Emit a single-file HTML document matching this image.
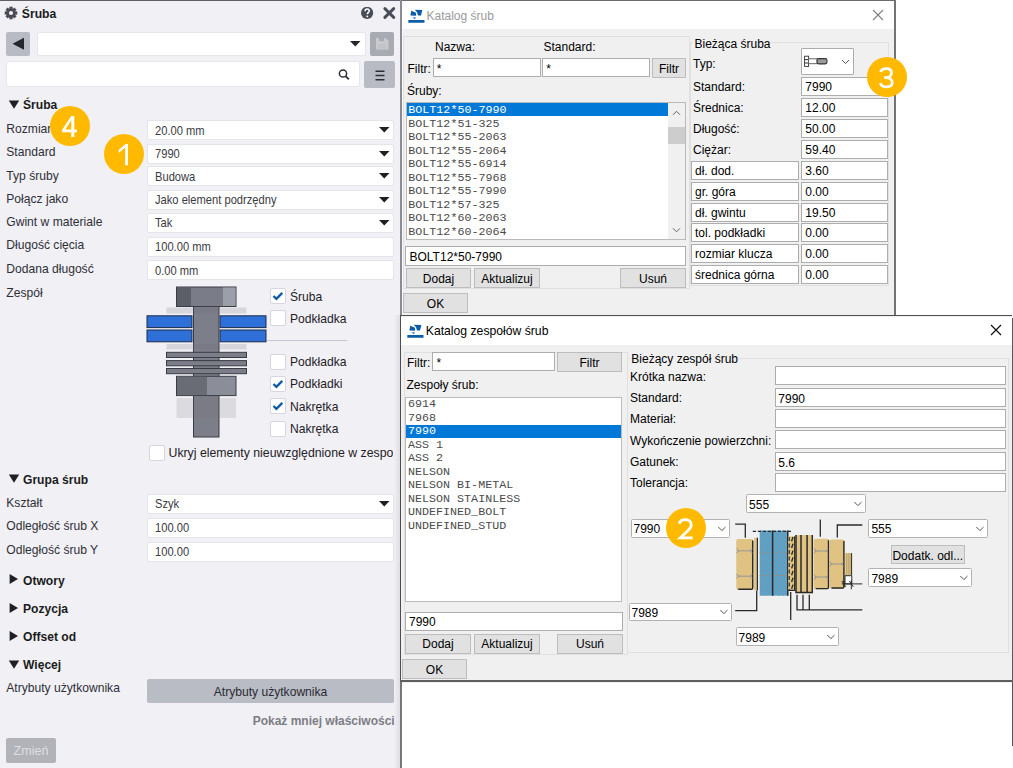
<!DOCTYPE html><html><head><meta charset="utf-8"><style>
html,body{margin:0;padding:0;width:1013px;height:768px;overflow:hidden;background:#fff}
.a{position:absolute}
.t{position:absolute;white-space:nowrap;line-height:1em;font-family:"Liberation Sans",sans-serif}
.t.m{font-family:"Liberation Mono",monospace}
</style></head><body><div class="a" style="left:0;top:0;width:1013px;height:768px;background:#fff"></div>
<div class="a" style="left:0px;top:0px;width:400px;height:768px;background:#f1f0f5;"></div>
<div class="a" style="left:0px;top:0px;width:400px;height:1px;background:#5d5f69;"></div>
<svg class="a" style="left:4px;top:6px;" width="14" height="14" viewBox="0 0 14 14"><g transform="translate(7,7)" fill="#474a54"><rect x="-1.6" y="-6.3" width="3.2" height="3" transform="rotate(0)"/><rect x="-1.6" y="-6.3" width="3.2" height="3" transform="rotate(45)"/><rect x="-1.6" y="-6.3" width="3.2" height="3" transform="rotate(90)"/><rect x="-1.6" y="-6.3" width="3.2" height="3" transform="rotate(135)"/><rect x="-1.6" y="-6.3" width="3.2" height="3" transform="rotate(180)"/><rect x="-1.6" y="-6.3" width="3.2" height="3" transform="rotate(225)"/><rect x="-1.6" y="-6.3" width="3.2" height="3" transform="rotate(270)"/><rect x="-1.6" y="-6.3" width="3.2" height="3" transform="rotate(315)"/><circle r="4.6"/><circle r="2.1" fill="#f1f0f5"/></g></svg>
<div class="t s" style="left:21.80px;top:7.97px;font-size:12.2px;color:#1b1c20;font-weight:700;">Śruba</div>
<svg class="a" style="left:361px;top:7px;" width="13" height="13" viewBox="0 0 13 13"><circle cx="6.1" cy="5.9" r="6.1" fill="#4a4d57"/><path d="M4.1 4.3 C4.1 2.8 5 2.1 6.2 2.1 C7.4 2.1 8.2 2.9 8.2 3.9 C8.2 5.3 6.3 5.5 6.3 7.3" fill="none" stroke="#fff" stroke-width="1.5"/><circle cx="6.3" cy="9.4" r="0.95" fill="#fff"/></svg>
<svg class="a" style="left:383px;top:7px;" width="13" height="13" viewBox="0 0 13 13"><path d="M1.9 1.6 L10.7 10.4 M10.7 1.6 L1.9 10.4" stroke="#4a4d57" stroke-width="2.9" stroke-linecap="round"/></svg>
<div class="a" style="left:6px;top:32px;width:24px;height:24px;background:#b8bac4;border-radius:2px;"></div>
<svg class="a" style="left:6px;top:32px;" width="24" height="24" viewBox="0 0 24 24"><path d="M6.5 11.8 L18 5.8 L18 17.8 Z" fill="#25272e"/></svg>
<div class="a" style="left:36.5px;top:32px;width:329px;height:23.5px;background:#fff;border:1px solid #e6e6ec;box-sizing:border-box;border-radius:2px;"></div>
<svg class="a" style="left:350px;top:41px;" width="11" height="6" viewBox="0 0 11 6"><path d="M0 0 L10.5 0 L5.25 5.5 Z" fill="#25272e"/></svg>
<div class="a" style="left:370px;top:32px;width:24px;height:24px;background:#a9abb2;border-radius:2px;"></div>
<svg class="a" style="left:370px;top:32px;" width="24" height="24" viewBox="0 0 24 24"><path d="M6 6 H15.5 L18.5 9 V17.5 H6 Z" fill="#c9cace"/><rect x="9" y="6" width="5" height="3.2" fill="#a9abb2"/><rect x="8.5" y="12" width="7.5" height="5.5" fill="#c2c3c8"/></svg>
<div class="a" style="left:5.5px;top:61.3px;width:354px;height:26px;background:#fff;border:1px solid #e6e6ec;box-sizing:border-box;border-radius:2px;"></div>
<svg class="a" style="left:338px;top:68px;" width="13" height="13" viewBox="0 0 13 13"><circle cx="5" cy="5.5" r="3.6" fill="none" stroke="#2b2d33" stroke-width="1.5"/><path d="M7.6 8.2 L10.8 11.4" stroke="#2b2d33" stroke-width="1.8"/></svg>
<div class="a" style="left:364.3px;top:61.3px;width:30.7px;height:26.4px;background:#b8bac4;border-radius:2px;"></div>
<svg class="a" style="left:365px;top:61px;" width="30" height="26" viewBox="0 0 30 26"><path d="M10.5 10.2 H19.5 M10.5 14.5 H19.5 M10.5 18.8 H19.5" stroke="#2b2d36" stroke-width="1.4"/></svg>
<svg class="a" style="left:8px;top:100px;" width="12" height="10" viewBox="0 0 12 10"><path d="M0.8 0.4 L11.2 0.4 L6 8.8 Z" fill="#1f2026"/></svg>
<div class="t s" style="left:23.00px;top:99.25px;font-size:12.1px;color:#1b1c20;font-weight:700;">Śruba</div>
<div class="t s" style="left:6.30px;top:123.05px;font-size:12.1px;color:#2e2f35;">Rozmiar</div>
<div class="a" style="left:147px;top:120.4px;width:247px;height:20px;background:#fff;border:1px solid #e4e4ea;box-sizing:border-box;border-radius:2px;"></div>
<div class="t s" style="left:154.80px;top:124.87px;font-size:12.2px;color:#3a3b42;transform:scaleX(0.915);transform-origin:0 0;">20.00 mm</div>
<svg class="a" style="left:379px;top:127.4px;" width="11" height="6" viewBox="0 0 11 6"><path d="M0 0 L10.5 0 L5.25 5.5 Z" fill="#1f2026"/></svg>
<div class="t s" style="left:6.30px;top:146.15px;font-size:12.1px;color:#2e2f35;">Standard</div>
<div class="a" style="left:147px;top:143.6px;width:247px;height:20px;background:#fff;border:1px solid #e4e4ea;box-sizing:border-box;border-radius:2px;"></div>
<div class="t s" style="left:154.80px;top:148.07px;font-size:12.2px;color:#3a3b42;transform:scaleX(0.915);transform-origin:0 0;">7990</div>
<svg class="a" style="left:379px;top:150.6px;" width="11" height="6" viewBox="0 0 11 6"><path d="M0 0 L10.5 0 L5.25 5.5 Z" fill="#1f2026"/></svg>
<div class="t s" style="left:6.30px;top:169.55px;font-size:12.1px;color:#2e2f35;">Typ śruby</div>
<div class="a" style="left:147px;top:166.4px;width:247px;height:20px;background:#fff;border:1px solid #e4e4ea;box-sizing:border-box;border-radius:2px;"></div>
<div class="t s" style="left:154.80px;top:170.87px;font-size:12.2px;color:#3a3b42;transform:scaleX(0.915);transform-origin:0 0;">Budowa</div>
<svg class="a" style="left:379px;top:173.4px;" width="11" height="6" viewBox="0 0 11 6"><path d="M0 0 L10.5 0 L5.25 5.5 Z" fill="#1f2026"/></svg>
<div class="t s" style="left:6.30px;top:192.55px;font-size:12.1px;color:#2e2f35;">Połącz jako</div>
<div class="a" style="left:147px;top:189.6px;width:247px;height:20px;background:#fff;border:1px solid #e4e4ea;box-sizing:border-box;border-radius:2px;"></div>
<div class="t s" style="left:154.80px;top:194.07px;font-size:12.2px;color:#3a3b42;transform:scaleX(0.915);transform-origin:0 0;">Jako element podrzędny</div>
<svg class="a" style="left:379px;top:196.6px;" width="11" height="6" viewBox="0 0 11 6"><path d="M0 0 L10.5 0 L5.25 5.5 Z" fill="#1f2026"/></svg>
<div class="t s" style="left:6.30px;top:215.95px;font-size:12.1px;color:#2e2f35;">Gwint w materiale</div>
<div class="a" style="left:147px;top:213px;width:247px;height:20px;background:#fff;border:1px solid #e4e4ea;box-sizing:border-box;border-radius:2px;"></div>
<div class="t s" style="left:154.80px;top:217.47px;font-size:12.2px;color:#3a3b42;transform:scaleX(0.915);transform-origin:0 0;">Tak</div>
<svg class="a" style="left:379px;top:220px;" width="11" height="6" viewBox="0 0 11 6"><path d="M0 0 L10.5 0 L5.25 5.5 Z" fill="#1f2026"/></svg>
<div class="t s" style="left:6.30px;top:238.95px;font-size:12.1px;color:#2e2f35;">Długość cięcia</div>
<div class="a" style="left:147px;top:236.6px;width:247px;height:20px;background:#fff;border:1px solid #e4e4ea;box-sizing:border-box;border-radius:2px;"></div>
<div class="t s" style="left:154.80px;top:241.07px;font-size:12.2px;color:#3a3b42;transform:scaleX(0.915);transform-origin:0 0;">100.00 mm</div>
<div class="t s" style="left:6.30px;top:262.55px;font-size:12.1px;color:#2e2f35;">Dodana długość</div>
<div class="a" style="left:147px;top:260.2px;width:247px;height:20px;background:#fff;border:1px solid #e4e4ea;box-sizing:border-box;border-radius:2px;"></div>
<div class="t s" style="left:154.80px;top:264.67px;font-size:12.2px;color:#3a3b42;transform:scaleX(0.915);transform-origin:0 0;">0.00 mm</div>
<div class="t s" style="left:6.30px;top:287.05px;font-size:12.1px;color:#2e2f35;">Zespół</div>
<svg class="a" style="left:0px;top:0px;pointer-events:none" width="400" height="768" viewBox="0 0 400 768"><rect x="147" y="315.8" width="45" height="11.8" fill="#2e6fd8" stroke="#1c2c4c" stroke-width="1"/><rect x="220" y="315.8" width="46" height="11.8" fill="#2e6fd8" stroke="#1c2c4c" stroke-width="1"/><rect x="147" y="330" width="45" height="11.8" fill="#2e6fd8" stroke="#1c2c4c" stroke-width="1"/><rect x="220" y="330" width="46" height="11.8" fill="#2e6fd8" stroke="#1c2c4c" stroke-width="1"/><rect x="193.5" y="306" width="25.5" height="131" fill="#7c7e89" stroke="#3a3c44" stroke-width="1"/><rect x="166.5" y="352.3" width="80" height="5.2" fill="#7b7d88" stroke="#3a3c44" stroke-width="1"/><rect x="166.5" y="360.6" width="80" height="5.2" fill="#7b7d88" stroke="#3a3c44" stroke-width="1"/><rect x="166.5" y="368.5" width="80" height="5.2" fill="#7b7d88" stroke="#3a3c44" stroke-width="1"/><rect x="176.5" y="287" width="59.5" height="19.5" fill="#7a7c87" stroke="#3a3c44" stroke-width="1"/><rect x="177" y="287.5" width="14" height="18.5" fill="#5b5d67"/><rect x="223" y="287.5" width="12.5" height="18.5" fill="#9c9ea8"/><rect x="176.5" y="376.3" width="59.5" height="19.3" fill="#8b8d98" stroke="#3a3c44" stroke-width="1"/><rect x="177" y="376.8" width="30" height="18.3" fill="#696b75"/><rect x="166.5" y="307.5" width="80" height="6" fill="rgba(110,110,120,0.2)"/><rect x="166.5" y="344" width="80" height="5.5" fill="rgba(110,110,120,0.2)"/><rect x="176.5" y="398" width="59.5" height="20" fill="rgba(110,110,120,0.17)"/></svg>
<div class="a" style="left:269.5px;top:288px;width:16px;height:16px;background:#fff;border:1px solid #d6d6de;box-sizing:border-box;border-radius:2px;"></div>
<svg class="a" style="left:269.5px;top:288px;" width="16" height="16" viewBox="0 0 16 16"><path d="M3.5 8 L6.4 10.8 L12.3 4.9" fill="none" stroke="#0d58a8" stroke-width="2.3"/></svg>
<div class="t s" style="left:290.00px;top:290.55px;font-size:12.1px;color:#1f2025;">Śruba</div>
<div class="a" style="left:269.5px;top:310px;width:16px;height:16px;background:#fff;border:1px solid #d6d6de;box-sizing:border-box;border-radius:2px;"></div>
<div class="t s" style="left:290.00px;top:312.75px;font-size:12.1px;color:#1f2025;">Podkładka</div>
<div class="a" style="left:269.5px;top:354px;width:16px;height:16px;background:#fff;border:1px solid #d6d6de;box-sizing:border-box;border-radius:2px;"></div>
<div class="t s" style="left:290.00px;top:356.25px;font-size:12.1px;color:#1f2025;">Podkładka</div>
<div class="a" style="left:269.5px;top:376px;width:16px;height:16px;background:#fff;border:1px solid #d6d6de;box-sizing:border-box;border-radius:2px;"></div>
<svg class="a" style="left:269.5px;top:376px;" width="16" height="16" viewBox="0 0 16 16"><path d="M3.5 8 L6.4 10.8 L12.3 4.9" fill="none" stroke="#0d58a8" stroke-width="2.3"/></svg>
<div class="t s" style="left:290.00px;top:378.45px;font-size:12.1px;color:#1f2025;">Podkładki</div>
<div class="a" style="left:269.5px;top:398px;width:16px;height:16px;background:#fff;border:1px solid #d6d6de;box-sizing:border-box;border-radius:2px;"></div>
<svg class="a" style="left:269.5px;top:398px;" width="16" height="16" viewBox="0 0 16 16"><path d="M3.5 8 L6.4 10.8 L12.3 4.9" fill="none" stroke="#0d58a8" stroke-width="2.3"/></svg>
<div class="t s" style="left:290.00px;top:400.55px;font-size:12.1px;color:#1f2025;">Nakrętka</div>
<div class="a" style="left:269.5px;top:420.5px;width:16px;height:16px;background:#fff;border:1px solid #d6d6de;box-sizing:border-box;border-radius:2px;"></div>
<div class="t s" style="left:290.00px;top:422.85px;font-size:12.1px;color:#1f2025;">Nakrętka</div>
<div class="a" style="left:267px;top:339.5px;width:80px;height:1.2px;background:#c7c8cf;"></div>
<div class="a" style="left:149px;top:444.5px;width:16px;height:16px;background:#fff;border:1px solid #d6d6de;box-sizing:border-box;border-radius:2px;"></div>
<div class="t s" style="left:168.50px;top:447.29px;font-size:12.3px;color:#1f2025;width:224.5px;overflow:hidden">Ukryj elementy nieuwzględnione w zespo</div>
<svg class="a" style="left:8px;top:474px;" width="12" height="10" viewBox="0 0 12 10"><path d="M0.8 0.4 L11.2 0.4 L6 8.8 Z" fill="#1f2026"/></svg>
<div class="t s" style="left:23.00px;top:473.55px;font-size:12.1px;color:#1b1c20;font-weight:700;">Grupa śrub</div>
<div class="t s" style="left:6.30px;top:496.75px;font-size:12.1px;color:#2e2f35;">Kształt</div>
<div class="a" style="left:147px;top:494px;width:247px;height:20px;background:#fff;border:1px solid #e4e4ea;box-sizing:border-box;border-radius:2px;"></div>
<div class="t s" style="left:154.80px;top:498.47px;font-size:12.2px;color:#3a3b42;transform:scaleX(0.915);transform-origin:0 0;">Szyk</div>
<svg class="a" style="left:379px;top:501px;" width="11" height="6" viewBox="0 0 11 6"><path d="M0 0 L10.5 0 L5.25 5.5 Z" fill="#1f2026"/></svg>
<div class="t s" style="left:6.30px;top:520.05px;font-size:12.1px;color:#2e2f35;">Odległość śrub X</div>
<div class="a" style="left:147px;top:518px;width:247px;height:20px;background:#fff;border:1px solid #e4e4ea;box-sizing:border-box;border-radius:2px;"></div>
<div class="t s" style="left:154.80px;top:522.47px;font-size:12.2px;color:#3a3b42;transform:scaleX(0.915);transform-origin:0 0;">100.00</div>
<div class="t s" style="left:6.30px;top:543.75px;font-size:12.1px;color:#2e2f35;">Odległość śrub Y</div>
<div class="a" style="left:147px;top:542px;width:247px;height:20px;background:#fff;border:1px solid #e4e4ea;box-sizing:border-box;border-radius:2px;"></div>
<div class="t s" style="left:154.80px;top:546.47px;font-size:12.2px;color:#3a3b42;transform:scaleX(0.915);transform-origin:0 0;">100.00</div>
<svg class="a" style="left:9px;top:574px;" width="10" height="11" viewBox="0 0 10 11"><path d="M0.6 0 L9 5 L0.6 10 Z" fill="#1f2026"/></svg>
<div class="t s" style="left:23.00px;top:574.55px;font-size:12.1px;color:#1b1c20;font-weight:700;">Otwory</div>
<svg class="a" style="left:9px;top:602.8px;" width="10" height="11" viewBox="0 0 10 11"><path d="M0.6 0 L9 5 L0.6 10 Z" fill="#1f2026"/></svg>
<div class="t s" style="left:23.00px;top:602.55px;font-size:12.1px;color:#1b1c20;font-weight:700;">Pozycja</div>
<svg class="a" style="left:9px;top:631.3px;" width="10" height="11" viewBox="0 0 10 11"><path d="M0.6 0 L9 5 L0.6 10 Z" fill="#1f2026"/></svg>
<div class="t s" style="left:23.00px;top:630.95px;font-size:12.1px;color:#1b1c20;font-weight:700;">Offset od</div>
<svg class="a" style="left:8px;top:659.5px;" width="12" height="10" viewBox="0 0 12 10"><path d="M0.8 0.4 L11.2 0.4 L6 8.8 Z" fill="#1f2026"/></svg>
<div class="t s" style="left:23.00px;top:658.75px;font-size:12.1px;color:#1b1c20;font-weight:700;">Więcej</div>
<div class="t s" style="left:6.30px;top:681.95px;font-size:12.1px;color:#2e2f35;">Atrybuty użytkownika</div>
<div class="a" style="left:147px;top:679px;width:247px;height:24px;background:#b9bbc5;border-radius:2px;"></div>
<div class="t s" style="left:270.50px;top:685.75px;font-size:12.1px;color:#2a2b31;transform:translateX(-50%);">Atrybuty użytkownika</div>
<div class="t s" style="right:618.30px;top:715.04px;font-size:12.0px;color:#7c7d84;font-weight:700;">Pokaż mniej właściwości</div>
<div class="a" style="left:6px;top:738.3px;width:50.2px;height:25px;background:#b2b3b9;border-radius:2px;"></div>
<div class="t s" style="left:31.00px;top:744.83px;font-size:12.6px;color:#dedee3;transform:translateX(-50%);">Zmień</div>
<div class="a" style="left:394px;top:315px;width:6px;height:453px;background:linear-gradient(to right, rgba(0,0,0,0), rgba(0,0,0,0.08))"></div>
<div class="a" style="left:400px;top:0px;width:496px;height:316px;background:#f0f0f0;"></div>
<div class="a" style="left:402px;top:1px;width:492px;height:28px;background:#fff;"></div>
<div class="a" style="left:400px;top:0px;width:496px;height:1px;background:#6b6b6b;"></div>
<div class="a" style="left:400px;top:0px;width:2px;height:316px;background:#8a8c95;"></div>
<div class="a" style="left:894px;top:0px;width:2px;height:316px;background:#737373;"></div>
<div class="a" style="left:402px;top:29px;width:1px;height:286px;background:#fafafa;"></div>
<svg class="a" style="left:408px;top:9px;" width="18" height="16" viewBox="0 0 18 16"><path d="M3.2 1.8 L8 3.8 L8.1 6.7 L2.4 6.4 Z" fill="#0b5ca9"/><path d="M6.8 0.8 L14.4 1 L13 6.4 L10 6.4 L9 3.2 Z" fill="#0b5ca9"/><path d="M4.3 8.2 L8 8.5 L6.9 9.9 Z" fill="#0b5ca9"/><rect x="0.3" y="10.9" width="16.2" height="2.9" rx="0.4" fill="#0b5ca9"/></svg>
<div class="t s" style="left:426.50px;top:9.64px;font-size:12.0px;color:#9a9a9a;">Katalog śrub</div>
<svg class="a" style="left:872px;top:9px;" width="12" height="12" viewBox="0 0 12 12"><path d="M1 1 L11 11 M11 1 L1 11" stroke="#808080" stroke-width="1.1"/></svg>
<div class="a" style="left:403px;top:36px;width:287px;height:253px;border:1px solid #e0e0e0;box-sizing:border-box;"></div>
<div class="t s" style="left:435.00px;top:40.84px;font-size:12.0px;color:#000;">Nazwa:</div>
<div class="t s" style="left:543.50px;top:40.84px;font-size:12.0px;color:#000;">Standard:</div>
<div class="t s" style="left:407.50px;top:62.84px;font-size:12.0px;color:#000;">Filtr:</div>
<div class="a" style="left:433px;top:58px;width:108px;height:19px;background:#fff;border:1px solid #adadad;box-sizing:border-box;"></div>
<div class="t s" style="left:436.80px;top:63.44px;font-size:12.0px;color:#000;">*</div>
<div class="a" style="left:542px;top:58px;width:108px;height:19px;background:#fff;border:1px solid #adadad;box-sizing:border-box;"></div>
<div class="t s" style="left:546.30px;top:63.44px;font-size:12.0px;color:#000;">*</div>
<div class="a" style="left:652px;top:58px;width:34px;height:20px;background:#e1e1e1;border:1px solid #bdbdbd;box-sizing:border-box;"></div>
<div class="t s" style="left:669.00px;top:62.84px;font-size:12.0px;color:#000;transform:translateX(-50%);">Filtr</div>
<div class="t s" style="left:407.00px;top:85.34px;font-size:12.0px;color:#000;">Śruby:</div>
<div class="a" style="left:406px;top:102px;width:280px;height:138px;background:#fff;border:1px solid #bababa;box-sizing:border-box;"></div>
<div class="a" style="left:407px;top:103px;width:261px;height:13px;background:#0078d7;"></div>
<div class="t m" style="left:408.30px;top:105.44px;font-size:11.7px;color:#fff;">BOLT12*50-7990</div>
<div class="t m" style="left:408.30px;top:118.91px;font-size:11.7px;color:#4a4a4a;">BOLT12*51-325</div>
<div class="t m" style="left:408.30px;top:132.38px;font-size:11.7px;color:#4a4a4a;">BOLT12*55-2063</div>
<div class="t m" style="left:408.30px;top:145.85px;font-size:11.7px;color:#4a4a4a;">BOLT12*55-2064</div>
<div class="t m" style="left:408.30px;top:159.32px;font-size:11.7px;color:#4a4a4a;">BOLT12*55-6914</div>
<div class="t m" style="left:408.30px;top:172.79px;font-size:11.7px;color:#4a4a4a;">BOLT12*55-7968</div>
<div class="t m" style="left:408.30px;top:186.26px;font-size:11.7px;color:#4a4a4a;">BOLT12*55-7990</div>
<div class="t m" style="left:408.30px;top:199.73px;font-size:11.7px;color:#4a4a4a;">BOLT12*57-325</div>
<div class="t m" style="left:408.30px;top:213.20px;font-size:11.7px;color:#4a4a4a;">BOLT12*60-2063</div>
<div class="t m" style="left:408.30px;top:226.67px;font-size:11.7px;color:#4a4a4a;">BOLT12*60-2064</div>
<div class="a" style="left:668px;top:103px;width:17px;height:136px;background:#f0f0f0;"></div>
<div class="a" style="left:668px;top:127px;width:17px;height:17px;background:#cdcdcd;"></div>
<svg class="a" style="left:668px;top:108px;" width="17" height="10" viewBox="0 0 17 10"><path d="M5 6.8 L8.5 3.3 L12 6.8" fill="none" stroke="#606060" stroke-width="1"/></svg>
<svg class="a" style="left:668px;top:225px;" width="17" height="10" viewBox="0 0 17 10"><path d="M5 3.3 L8.5 6.8 L12 3.3" fill="none" stroke="#606060" stroke-width="1"/></svg>
<div class="a" style="left:405px;top:246px;width:281px;height:20px;background:#fff;border:1px solid #adadad;box-sizing:border-box;"></div>
<div class="t s" style="left:409.50px;top:251.14px;font-size:12.0px;color:#000;">BOLT12*50-7990</div>
<div class="a" style="left:406px;top:268px;width:65px;height:20px;background:#e1e1e1;border:1px solid #bdbdbd;box-sizing:border-box;"></div>
<div class="t s" style="left:438.50px;top:272.84px;font-size:12.0px;color:#000;transform:translateX(-50%);">Dodaj</div>
<div class="a" style="left:474px;top:268px;width:66px;height:20px;background:#e1e1e1;border:1px solid #bdbdbd;box-sizing:border-box;"></div>
<div class="t s" style="left:507.00px;top:272.84px;font-size:12.0px;color:#000;transform:translateX(-50%);">Aktualizuj</div>
<div class="a" style="left:620px;top:268px;width:66px;height:20px;background:#e1e1e1;border:1px solid #bdbdbd;box-sizing:border-box;"></div>
<div class="t s" style="left:653.00px;top:272.84px;font-size:12.0px;color:#000;transform:translateX(-50%);">Usuń</div>
<div class="a" style="left:403px;top:293px;width:65px;height:20px;background:#e1e1e1;border:1px solid #bdbdbd;box-sizing:border-box;"></div>
<div class="t s" style="left:435.50px;top:297.84px;font-size:12.0px;color:#000;transform:translateX(-50%);">OK</div>
<div class="a" style="left:690px;top:42px;width:199px;height:244px;border:1px solid #e0e0e0;box-sizing:border-box;"></div>
<div class="a" style="left:693px;top:36px;width:70px;height:12px;background:#f0f0f0;"></div>
<div class="t s" style="left:694.50px;top:37.64px;font-size:12.0px;color:#000;">Bieżąca śruba</div>
<div class="t s" style="left:693.00px;top:57.64px;font-size:12.0px;color:#000;">Typ:</div>
<div class="t s" style="left:693.00px;top:80.64px;font-size:12.0px;color:#000;">Standard:</div>
<div class="t s" style="left:693.00px;top:102.44px;font-size:12.0px;color:#000;">Średnica:</div>
<div class="t s" style="left:693.00px;top:123.34px;font-size:12.0px;color:#000;">Długość:</div>
<div class="t s" style="left:693.00px;top:144.34px;font-size:12.0px;color:#000;">Ciężar:</div>
<div class="a" style="left:801px;top:48px;width:53px;height:27px;background:#fff;border:1px solid #adadad;box-sizing:border-box;border-radius:1px;"></div>
<svg class="a" style="left:803px;top:54px;" width="26" height="14" viewBox="0 0 26 14"><rect x="1.6" y="2.2" width="4" height="10.2" fill="#fff" stroke="#333" stroke-width="0.9"/><path d="M1.6 5.6 H5.6 M1.6 9 H5.6" stroke="#333" stroke-width="1"/><rect x="5.6" y="4.8" width="8.6" height="4.9" fill="#fff" stroke="#555" stroke-width="0.9"/><rect x="14" y="4.6" width="10" height="5.3" rx="1.8" fill="#9a9a9a" stroke="#333" stroke-width="1.1"/></svg>
<svg class="a" style="left:839px;top:58px;" width="12" height="8" viewBox="0 0 12 8"><path d="M3 2 L6.5 5.5 L10 2" fill="none" stroke="#444" stroke-width="0.9"/></svg>
<div class="a" style="left:801px;top:77px;width:87px;height:19px;background:#fff;border:1px solid #adadad;box-sizing:border-box;"></div>
<div class="t s" style="left:805.30px;top:81.44px;font-size:12.0px;color:#000;">7990</div>
<div class="a" style="left:801px;top:98px;width:87px;height:19px;background:#fff;border:1px solid #adadad;box-sizing:border-box;"></div>
<div class="t s" style="left:805.30px;top:102.44px;font-size:12.0px;color:#000;">12.00</div>
<div class="a" style="left:801px;top:119px;width:87px;height:19px;background:#fff;border:1px solid #adadad;box-sizing:border-box;"></div>
<div class="t s" style="left:805.30px;top:123.44px;font-size:12.0px;color:#000;">50.00</div>
<div class="a" style="left:801px;top:140px;width:87px;height:19px;background:#fff;border:1px solid #adadad;box-sizing:border-box;"></div>
<div class="t s" style="left:805.30px;top:144.44px;font-size:12.0px;color:#000;">59.40</div>
<div class="a" style="left:691px;top:161px;width:108px;height:19px;background:#fff;border:1px solid #adadad;box-sizing:border-box;"></div>
<div class="t s" style="left:695.00px;top:165.44px;font-size:12.0px;color:#000;">dł. dod.</div>
<div class="a" style="left:801px;top:161px;width:87px;height:19px;background:#fff;border:1px solid #adadad;box-sizing:border-box;"></div>
<div class="t s" style="left:805.30px;top:165.44px;font-size:12.0px;color:#000;">3.60</div>
<div class="a" style="left:691px;top:182px;width:108px;height:19px;background:#fff;border:1px solid #adadad;box-sizing:border-box;"></div>
<div class="t s" style="left:695.00px;top:186.44px;font-size:12.0px;color:#000;">gr. góra</div>
<div class="a" style="left:801px;top:182px;width:87px;height:19px;background:#fff;border:1px solid #adadad;box-sizing:border-box;"></div>
<div class="t s" style="left:805.30px;top:186.44px;font-size:12.0px;color:#000;">0.00</div>
<div class="a" style="left:691px;top:203px;width:108px;height:19px;background:#fff;border:1px solid #adadad;box-sizing:border-box;"></div>
<div class="t s" style="left:695.00px;top:207.44px;font-size:12.0px;color:#000;">dł. gwintu</div>
<div class="a" style="left:801px;top:203px;width:87px;height:19px;background:#fff;border:1px solid #adadad;box-sizing:border-box;"></div>
<div class="t s" style="left:805.30px;top:207.44px;font-size:12.0px;color:#000;">19.50</div>
<div class="a" style="left:691px;top:223px;width:108px;height:19px;background:#fff;border:1px solid #adadad;box-sizing:border-box;"></div>
<div class="t s" style="left:695.00px;top:227.44px;font-size:12.0px;color:#000;">tol. podkładki</div>
<div class="a" style="left:801px;top:223px;width:87px;height:19px;background:#fff;border:1px solid #adadad;box-sizing:border-box;"></div>
<div class="t s" style="left:805.30px;top:227.44px;font-size:12.0px;color:#000;">0.00</div>
<div class="a" style="left:691px;top:244px;width:108px;height:19px;background:#fff;border:1px solid #adadad;box-sizing:border-box;"></div>
<div class="t s" style="left:695.00px;top:248.44px;font-size:12.0px;color:#000;">rozmiar klucza</div>
<div class="a" style="left:801px;top:244px;width:87px;height:19px;background:#fff;border:1px solid #adadad;box-sizing:border-box;"></div>
<div class="t s" style="left:805.30px;top:248.44px;font-size:12.0px;color:#000;">0.00</div>
<div class="a" style="left:691px;top:265px;width:108px;height:19px;background:#fff;border:1px solid #adadad;box-sizing:border-box;"></div>
<div class="t s" style="left:695.00px;top:269.44px;font-size:12.0px;color:#000;">średnica górna</div>
<div class="a" style="left:801px;top:265px;width:87px;height:19px;background:#fff;border:1px solid #adadad;box-sizing:border-box;"></div>
<div class="t s" style="left:805.30px;top:269.44px;font-size:12.0px;color:#000;">0.00</div>
<div class="a" style="left:400px;top:315px;width:613px;height:368px;background:#f0f0f0;"></div>
<div class="a" style="left:401px;top:316.5px;width:611px;height:28px;background:#fff;"></div>
<div class="a" style="left:400px;top:315px;width:612px;height:1.4px;background:#505050;"></div>
<div class="a" style="left:400px;top:315px;width:1.2px;height:368px;background:#4d4d4d;"></div>
<div class="a" style="left:1011.6px;top:318px;width:1.4px;height:365px;background:#5a5a5a;"></div>
<div class="a" style="left:400px;top:680.2px;width:613px;height:2.3px;background:#5e5e5e;"></div>
<svg class="a" style="left:407px;top:324px;" width="18" height="16" viewBox="0 0 18 16"><path d="M3.2 1.8 L8 3.8 L8.1 6.7 L2.4 6.4 Z" fill="#0b5ca9"/><path d="M6.8 0.8 L14.4 1 L13 6.4 L10 6.4 L9 3.2 Z" fill="#0b5ca9"/><path d="M4.3 8.2 L8 8.5 L6.9 9.9 Z" fill="#0b5ca9"/><rect x="0.3" y="10.9" width="16.2" height="2.9" rx="0.4" fill="#0b5ca9"/></svg>
<div class="t s" style="left:425.80px;top:325.07px;font-size:12.2px;color:#000;">Katalog zespołów śrub</div>
<svg class="a" style="left:990px;top:324px;" width="12" height="12" viewBox="0 0 12 12"><path d="M1 1 L11 11 M11 1 L1 11" stroke="#111" stroke-width="1.2"/></svg>
<div class="a" style="left:404px;top:352px;width:224px;height:303px;border:1px solid #e0e0e0;box-sizing:border-box;"></div>
<div class="t s" style="left:407.00px;top:356.84px;font-size:12.0px;color:#000;">Filtr:</div>
<div class="a" style="left:432px;top:352px;width:123px;height:19px;background:#fff;border:1px solid #adadad;box-sizing:border-box;"></div>
<div class="t s" style="left:436.50px;top:357.44px;font-size:12.0px;color:#000;">*</div>
<div class="a" style="left:557px;top:352px;width:65px;height:20px;background:#e1e1e1;border:1px solid #bdbdbd;box-sizing:border-box;"></div>
<div class="t s" style="left:589.50px;top:356.84px;font-size:12.0px;color:#000;transform:translateX(-50%);">Filtr</div>
<div class="t s" style="left:406.50px;top:379.24px;font-size:12.0px;color:#000;">Zespoły śrub:</div>
<div class="a" style="left:405px;top:397px;width:217px;height:205px;background:#fff;border:1px solid #bababa;box-sizing:border-box;"></div>
<div class="a" style="left:406px;top:425px;width:215px;height:13px;background:#0078d7;"></div>
<div class="t m" style="left:408.00px;top:399.44px;font-size:11.7px;color:#4a4a4a;">6914</div>
<div class="t m" style="left:408.00px;top:412.91px;font-size:11.7px;color:#4a4a4a;">7968</div>
<div class="t m" style="left:408.00px;top:426.38px;font-size:11.7px;color:#fff;">7990</div>
<div class="t m" style="left:408.00px;top:439.85px;font-size:11.7px;color:#4a4a4a;">ASS 1</div>
<div class="t m" style="left:408.00px;top:453.32px;font-size:11.7px;color:#4a4a4a;">ASS 2</div>
<div class="t m" style="left:408.00px;top:466.79px;font-size:11.7px;color:#4a4a4a;">NELSON</div>
<div class="t m" style="left:408.00px;top:480.26px;font-size:11.7px;color:#4a4a4a;">NELSON BI-METAL</div>
<div class="t m" style="left:408.00px;top:493.73px;font-size:11.7px;color:#4a4a4a;">NELSON STAINLESS</div>
<div class="t m" style="left:408.00px;top:507.20px;font-size:11.7px;color:#4a4a4a;">UNDEFINED_BOLT</div>
<div class="t m" style="left:408.00px;top:520.67px;font-size:11.7px;color:#4a4a4a;">UNDEFINED_STUD</div>
<div class="a" style="left:405px;top:612px;width:218px;height:19px;background:#fff;border:1px solid #adadad;box-sizing:border-box;"></div>
<div class="t s" style="left:409.00px;top:616.44px;font-size:12.0px;color:#000;">7990</div>
<div class="a" style="left:405px;top:634px;width:66px;height:20px;background:#e1e1e1;border:1px solid #bdbdbd;box-sizing:border-box;"></div>
<div class="t s" style="left:438.00px;top:638.34px;font-size:12.0px;color:#000;transform:translateX(-50%);">Dodaj</div>
<div class="a" style="left:474px;top:634px;width:66px;height:20px;background:#e1e1e1;border:1px solid #bdbdbd;box-sizing:border-box;"></div>
<div class="t s" style="left:507.00px;top:638.34px;font-size:12.0px;color:#000;transform:translateX(-50%);">Aktualizuj</div>
<div class="a" style="left:557px;top:634px;width:66px;height:20px;background:#e1e1e1;border:1px solid #bdbdbd;box-sizing:border-box;"></div>
<div class="t s" style="left:590.00px;top:638.34px;font-size:12.0px;color:#000;transform:translateX(-50%);">Usuń</div>
<div class="a" style="left:402px;top:659px;width:65px;height:20px;background:#e1e1e1;border:1px solid #bdbdbd;box-sizing:border-box;"></div>
<div class="t s" style="left:434.50px;top:663.84px;font-size:12.0px;color:#000;transform:translateX(-50%);">OK</div>
<div class="a" style="left:627px;top:358px;width:382px;height:295px;border:1px solid #e0e0e0;box-sizing:border-box;"></div>
<div class="a" style="left:630px;top:352px;width:108px;height:11px;background:#f0f0f0;"></div>
<div class="t s" style="left:631.30px;top:352.94px;font-size:12.0px;color:#000;">Bieżący zespół śrub</div>
<div class="t s" style="left:630.00px;top:371.24px;font-size:12.0px;color:#000;">Krótka nazwa:</div>
<div class="a" style="left:775px;top:366px;width:231px;height:19px;background:#fff;border:1px solid #adadad;box-sizing:border-box;"></div>
<div class="t s" style="left:630.00px;top:392.24px;font-size:12.0px;color:#000;">Standard:</div>
<div class="a" style="left:775px;top:388px;width:231px;height:19px;background:#fff;border:1px solid #adadad;box-sizing:border-box;"></div>
<div class="t s" style="left:778.30px;top:392.94px;font-size:12.0px;color:#000;">7990</div>
<div class="t s" style="left:630.00px;top:413.34px;font-size:12.0px;color:#000;">Materiał:</div>
<div class="a" style="left:775px;top:409px;width:231px;height:19px;background:#fff;border:1px solid #adadad;box-sizing:border-box;"></div>
<div class="t s" style="left:630.00px;top:434.64px;font-size:12.0px;color:#000;">Wykończenie powierzchni:</div>
<div class="a" style="left:775px;top:430px;width:231px;height:19px;background:#fff;border:1px solid #adadad;box-sizing:border-box;"></div>
<div class="t s" style="left:630.00px;top:455.84px;font-size:12.0px;color:#000;">Gatunek:</div>
<div class="a" style="left:775px;top:452px;width:231px;height:19px;background:#fff;border:1px solid #adadad;box-sizing:border-box;"></div>
<div class="t s" style="left:778.30px;top:456.94px;font-size:12.0px;color:#000;">5.6</div>
<div class="t s" style="left:630.00px;top:476.84px;font-size:12.0px;color:#000;">Tolerancja:</div>
<div class="a" style="left:775px;top:473px;width:231px;height:19px;background:#fff;border:1px solid #adadad;box-sizing:border-box;"></div>
<div class="a" style="left:746.1px;top:494.2px;width:119.5px;height:19px;background:#fff;border:1px solid #b2b2b2;box-sizing:border-box;border-radius:1.5px;"></div>
<div class="t s" style="left:749.10px;top:498.74px;font-size:12.0px;color:#000;">555</div>
<svg class="a" style="left:851.6px;top:500.09999999999997px;" width="12" height="8" viewBox="0 0 12 8"><path d="M2.3 2 L5.9 5.6 L9.5 2" fill="none" stroke="#555" stroke-width="1"/></svg>
<div class="a" style="left:630.5px;top:519.2px;width:99px;height:18.6px;background:#fff;border:1px solid #b2b2b2;box-sizing:border-box;border-radius:1.5px;"></div>
<div class="t s" style="left:633.50px;top:523.34px;font-size:12.0px;color:#000;">7990</div>
<svg class="a" style="left:715.5px;top:524.9px;" width="12" height="8" viewBox="0 0 12 8"><path d="M2.3 2 L5.9 5.6 L9.5 2" fill="none" stroke="#555" stroke-width="1"/></svg>
<div class="a" style="left:868.4px;top:519.2px;width:120px;height:18.6px;background:#fff;border:1px solid #b2b2b2;box-sizing:border-box;border-radius:1.5px;"></div>
<div class="t s" style="left:871.40px;top:523.34px;font-size:12.0px;color:#000;">555</div>
<svg class="a" style="left:974.4px;top:524.9px;" width="12" height="8" viewBox="0 0 12 8"><path d="M2.3 2 L5.9 5.6 L9.5 2" fill="none" stroke="#555" stroke-width="1"/></svg>
<div class="a" style="left:891px;top:545.1px;width:73.6px;height:19.4px;background:#e1e1e1;border:1px solid #bdbdbd;box-sizing:border-box;"></div>
<div class="t s" style="left:927.80px;top:549.64px;font-size:12.0px;color:#000;transform:translateX(-50%);">Dodatk. odl...</div>
<div class="a" style="left:868.4px;top:568.2px;width:103.5px;height:19px;background:#fff;border:1px solid #b2b2b2;box-sizing:border-box;border-radius:1.5px;"></div>
<div class="t s" style="left:871.40px;top:572.74px;font-size:12.0px;color:#000;">7989</div>
<svg class="a" style="left:957.9px;top:574.1px;" width="12" height="8" viewBox="0 0 12 8"><path d="M2.3 2 L5.9 5.6 L9.5 2" fill="none" stroke="#555" stroke-width="1"/></svg>
<div class="a" style="left:628.5px;top:602.8px;width:103px;height:18.5px;background:#fff;border:1px solid #b2b2b2;box-sizing:border-box;border-radius:1.5px;"></div>
<div class="t s" style="left:631.50px;top:606.84px;font-size:12.0px;color:#000;">7989</div>
<svg class="a" style="left:717.5px;top:608.4499999999999px;" width="12" height="8" viewBox="0 0 12 8"><path d="M2.3 2 L5.9 5.6 L9.5 2" fill="none" stroke="#555" stroke-width="1"/></svg>
<div class="a" style="left:735.6px;top:627.4px;width:103px;height:18.8px;background:#fff;border:1px solid #b2b2b2;box-sizing:border-box;border-radius:1.5px;"></div>
<div class="t s" style="left:738.60px;top:631.74px;font-size:12.0px;color:#000;">7989</div>
<svg class="a" style="left:824.6px;top:633.1999999999999px;" width="12" height="8" viewBox="0 0 12 8"><path d="M2.3 2 L5.9 5.6 L9.5 2" fill="none" stroke="#555" stroke-width="1"/></svg>
<svg class="a" style="left:0px;top:0px;pointer-events:none" width="1013" height="768" viewBox="0 0 1013 768"><path d="M735.2 524.1 H745.3 V537.8" fill="none" stroke="#2a2a2a" stroke-width="1.3"/><path d="M820.3 519.6 V536.7" fill="none" stroke="#2a2a2a" stroke-width="1.3"/><path d="M862.3 525 H837.3 V537.4" fill="none" stroke="#2a2a2a" stroke-width="1.3"/><path d="M735.2 610.7 H756.7 V590.5" fill="none" stroke="#2a2a2a" stroke-width="1.3"/><path d="M790.7 592 V620" fill="none" stroke="#2a2a2a" stroke-width="1.3"/><path d="M797 594.8 V609.9 H862.3 M803 594.8 V609.9 M809.3 594.8 V609.9" fill="none" stroke="#2a2a2a" stroke-width="1.3"/><rect x="736.25" y="539" width="17.149999999999977" height="51" rx="2.2" fill="#e0c283"/><path d="M752.6999999999999 540.5 V588 Q752.6999999999999 589.3 751.4 589.3 H738.25" fill="none" stroke="#2a2a2a" stroke-width="1.4"/><path d="M739.25 550.8 H749.9 M739.25 550.8 Q737.45 550.8 736.65 548.4 M739.25 550.8 Q737.45 550.8 736.65 553.1999999999999 M749.9 550.8 Q751.6 550.8 752.1999999999999 548.4 M749.9 550.8 Q751.6 550.8 752.1999999999999 553.1999999999999" fill="none" stroke="#8d919a" stroke-width="0.9"/><path d="M739.25 576.2 H749.9 M739.25 576.2 Q737.45 576.2 736.65 573.8000000000001 M739.25 576.2 Q737.45 576.2 736.65 578.6 M749.9 576.2 Q751.6 576.2 752.1999999999999 573.8000000000001 M749.9 576.2 Q751.6 576.2 752.1999999999999 578.6" fill="none" stroke="#8d919a" stroke-width="0.9"/><rect x="754.1" y="537.8" width="3.9" height="52.7" fill="#e0c283"/><path d="M757.4 537.8 V590.5" stroke="#2a2a2a" stroke-width="1.2"/><rect x="759.7" y="530.6" width="28.3" height="65.1" fill="#56a4cf"/><clipPath id="cp"><rect x="759.7" y="530.6" width="28.3" height="65.1"/></clipPath><path d="M759.7 462.8 L771.9 450.6 M773.6 450.6 L788 465.0 M759.7 467.8 L771.9 455.6 M773.6 455.6 L788 470.0 M759.7 472.8 L771.9 460.6 M773.6 460.6 L788 475.0 M759.7 477.8 L771.9 465.6 M773.6 465.6 L788 480.0 M759.7 482.8 L771.9 470.6 M773.6 470.6 L788 485.0 M759.7 487.8 L771.9 475.6 M773.6 475.6 L788 490.0 M759.7 492.8 L771.9 480.6 M773.6 480.6 L788 495.0 M759.7 497.8 L771.9 485.6 M773.6 485.6 L788 500.0 M759.7 502.8 L771.9 490.6 M773.6 490.6 L788 505.0 M759.7 507.8 L771.9 495.6 M773.6 495.6 L788 510.0 M759.7 512.8000000000001 L771.9 500.6 M773.6 500.6 L788 515.0 M759.7 517.8000000000001 L771.9 505.6 M773.6 505.6 L788 520.0 M759.7 522.8000000000001 L771.9 510.6 M773.6 510.6 L788 525.0 M759.7 527.8000000000001 L771.9 515.6 M773.6 515.6 L788 530.0 M759.7 532.8000000000001 L771.9 520.6 M773.6 520.6 L788 535.0 M759.7 537.8000000000001 L771.9 525.6 M773.6 525.6 L788 540.0 M759.7 542.8000000000001 L771.9 530.6 M773.6 530.6 L788 545.0 M759.7 547.8000000000001 L771.9 535.6 M773.6 535.6 L788 550.0 M759.7 552.8000000000001 L771.9 540.6 M773.6 540.6 L788 555.0 M759.7 557.8000000000001 L771.9 545.6 M773.6 545.6 L788 560.0 M759.7 562.8000000000001 L771.9 550.6 M773.6 550.6 L788 565.0 M759.7 567.8000000000001 L771.9 555.6 M773.6 555.6 L788 570.0 M759.7 572.8000000000001 L771.9 560.6 M773.6 560.6 L788 575.0 M759.7 577.8000000000001 L771.9 565.6 M773.6 565.6 L788 580.0 M759.7 582.8000000000001 L771.9 570.6 M773.6 570.6 L788 585.0 M759.7 587.8000000000001 L771.9 575.6 M773.6 575.6 L788 590.0 M759.7 592.8000000000001 L771.9 580.6 M773.6 580.6 L788 595.0 M759.7 597.8000000000001 L771.9 585.6 M773.6 585.6 L788 600.0 M759.7 602.8000000000001 L771.9 590.6 M773.6 590.6 L788 605.0 M759.7 607.8000000000001 L771.9 595.6 M773.6 595.6 L788 610.0 M759.7 612.8000000000001 L771.9 600.6 M773.6 600.6 L788 615.0 M759.7 617.8000000000001 L771.9 605.6 M773.6 605.6 L788 620.0 M759.7 622.8000000000001 L771.9 610.6 M773.6 610.6 L788 625.0 M759.7 627.8000000000001 L771.9 615.6 M773.6 615.6 L788 630.0 M759.7 632.8000000000001 L771.9 620.6 M773.6 620.6 L788 635.0 M759.7 637.8000000000001 L771.9 625.6 M773.6 625.6 L788 640.0 " stroke="#8f8d85" stroke-width="0.95" clip-path="url(#cp)"/><path d="M759.7 552.8 H788 M759.7 575.5 H788" stroke="#9a8a80" stroke-width="0.8" stroke-dasharray="3 2"/><path d="M772.6 530.6 V595.7 M787.8 530.6 V595.7" stroke="#2a2a2a" stroke-width="1.5"/><path d="M752.8 531.3 H792.5" fill="none" stroke="#2a2a2a" stroke-width="1.3" stroke-dasharray="3.2 1.8"/><rect x="788.2" y="536.4" width="7" height="54.6" fill="#e0c283"/><path d="M789.2 537 V590" stroke="#2a2a2a" stroke-width="1.2" stroke-dasharray="4 2.5"/><path d="M793 537.0 L791.6 541.2 M793 543.8 L791.6 548.0 M793 550.6 L791.6 554.8000000000001 M793 557.4 L791.6 561.6 M793 564.2 L791.6 568.4000000000001 M793 571.0 L791.6 575.2 M793 577.8 L791.6 582.0 M793 584.6 L791.6 588.8000000000001 " stroke="#2a2a2a" stroke-width="1.4"/><path d="M794.7 536.4 V591 M788.2 590.4 H795.3" stroke="#2a2a2a" stroke-width="1.3"/><rect x="795.3" y="535" width="17.7" height="58.2" fill="#e0c283"/><path d="M796 535 V593.2 M801 535 V593.2 M807.1 535 V593.2 M812.3 535 V593.2 M795.3 592.4 H813" stroke="#2a2a2a" stroke-width="1.5"/><rect x="813.7" y="538.7" width="15.5" height="50.59999999999991" rx="2.2" fill="#e0c283"/><path d="M828.5 540.2 V587.3 Q828.5 588.5999999999999 827.2 588.5999999999999 H815.7" fill="none" stroke="#2a2a2a" stroke-width="1.4"/><path d="M816.7 551 H825.7 M816.7 551 Q814.9000000000001 551 814.1 548.6 M816.7 551 Q814.9000000000001 551 814.1 553.4 M825.7 551 Q827.4000000000001 551 828.0 548.6 M825.7 551 Q827.4000000000001 551 828.0 553.4" fill="none" stroke="#8d919a" stroke-width="0.9"/><path d="M816.7 577 H825.7 M816.7 577 Q814.9000000000001 577 814.1 574.6 M816.7 577 Q814.9000000000001 577 814.1 579.4 M825.7 577 Q827.4000000000001 577 828.0 574.6 M825.7 577 Q827.4000000000001 577 828.0 579.4" fill="none" stroke="#8d919a" stroke-width="0.9"/><rect x="829.5" y="539.4" width="15.100000000000023" height="49.30000000000007" rx="2.2" fill="#e0c283"/><path d="M843.9 540.9 V586.7 Q843.9 588.0 842.6 588.0 H831.5" fill="none" stroke="#2a2a2a" stroke-width="1.4"/><path d="M832.5 564 H841.1 M832.5 564 Q830.7 564 829.9 561.6 M832.5 564 Q830.7 564 829.9 566.4 M841.1 564 Q842.8000000000001 564 843.4 561.6 M841.1 564 Q842.8000000000001 564 843.4 566.4" fill="none" stroke="#8d919a" stroke-width="0.9"/><rect x="845.2" y="553.1" width="6.8" height="22" fill="#e0c283"/><path d="M846.6 553.1 V575 M848.3 553.1 V575 M850 553.1 V575" stroke="#a88e60" stroke-width="0.6"/><path d="M851.6 553.1 V575.5" stroke="#2a2a2a" stroke-width="1"/><path d="M845 575.7 V583.9 H851.8 V575.7 Z" fill="#fff" stroke="#2a2a2a" stroke-width="1"/><path d="M841.8 583.9 H862.3 M841.8 581 L845.8 586.8 M849.3 581 L853.3 586.8 M851.3 580.5 V589.3 M844 580.5 V587" fill="none" stroke="#2a2a2a" stroke-width="1"/></svg>
<div class="a" style="left:1011.5px;top:682px;width:1.5px;height:64px;background:#555;"></div>
<div class="a" style="left:400px;top:682px;width:2px;height:86px;background:#76777c;"></div>
<svg class="a" style="left:49.900000000000006px;top:106px;" width="40" height="40" viewBox="0 0 40 40"><circle cx="20" cy="20" r="20" fill="#ffba00"/><path fill-rule="evenodd" d="M21.2 10 H24.3 V23.6 H26.9 V26.3 H24.3 V31 H21.3 V26.3 H12.1 V23.7 Z M21.3 14.3 L15.4 23.6 H21.3 Z" fill="#fff"/></svg>
<svg class="a" style="left:104px;top:133.9px;" width="40" height="40" viewBox="0 0 40 40"><circle cx="20" cy="20" r="20" fill="#ffba00"/><path d="M21.6 10.1 H24 V31.3 H21.2 V13.6 L14.7 18.9 V15.9 Z" fill="#fff"/></svg>
<svg class="a" style="left:867px;top:56.900000000000006px;" width="40" height="40" viewBox="0 0 40 40"><circle cx="20" cy="20" r="20" fill="#ffba00"/><path d="M13.5 14.9 C14.3 12.5 16.6 11.5 19.5 11.5 C22.7 11.5 24.5 13.4 24.5 15.9 C24.5 18.7 22.3 20.5 19.1 20.5 H17.3 M19.1 20.5 C23 20.5 25.2 22.7 25.2 25.6 C25.2 28.5 22.8 29.9 19.5 29.9 C16.4 29.9 14.1 28.6 13.3 26.1" fill="none" stroke="#fff" stroke-width="2.75"/></svg>
<svg class="a" style="left:666px;top:507.70000000000005px;" width="40" height="40" viewBox="0 0 40 40"><circle cx="20" cy="20" r="20" fill="#ffba00"/><path d="M13.3 15.8 C13.9 12.6 16.3 11.6 19.5 11.6 C23.1 11.6 25.2 13.8 25.2 16.8 C25.2 19.6 23.5 21.4 21.3 23.3 L14.2 29.9 H26.6" fill="none" stroke="#fff" stroke-width="2.75"/></svg></body></html>
